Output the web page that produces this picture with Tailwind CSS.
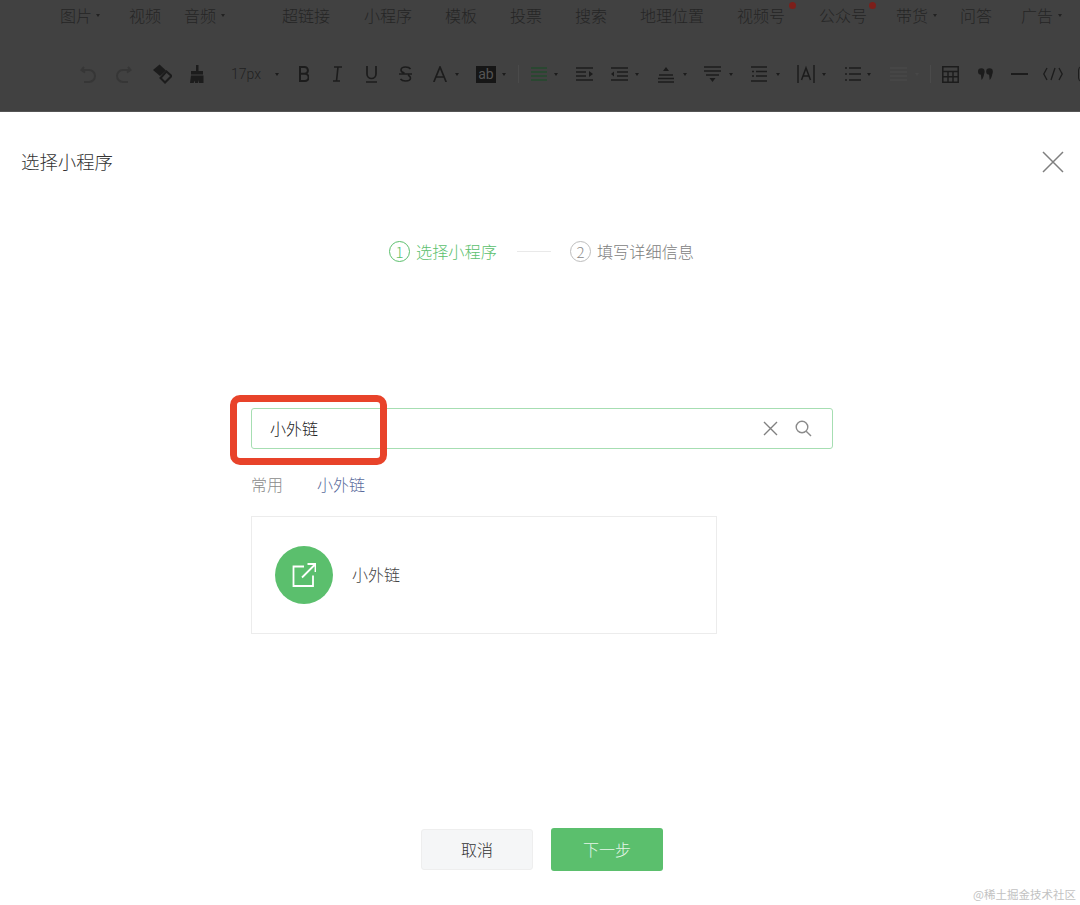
<!DOCTYPE html>
<html lang="zh-CN">
<head>
  <meta charset="UTF-8" />
  <title>选择小程序</title>
  <script src="https://cdn.jsdelivr.net/npm/@tailwindcss/browser@4"></script>
</head>
<body class="w-[1080px] h-[905px] overflow-hidden bg-white font-['Noto_Sans_CJK_SC','Noto_Sans',sans-serif]">

  <!-- Dimmed editor toolbar -->
  <div class="h-[112px] bg-[#414141] border-b border-b-[#555555] overflow-hidden text-[#252525]">
    <div class="h-[30px] flex items-center pl-[60px] text-[16px] font-light whitespace-nowrap *:shrink-0">
      <span class="w-[32px]">图片</span><i class="ml-[4px] border-x-[2px] border-t-[3px] border-x-transparent border-t-[#222]"></i>
      <span class="ml-[29px] w-[32px]">视频</span>
      <span class="ml-[23px] w-[32px]">音频</span><i class="ml-[5px] border-x-[2px] border-t-[3px] border-x-transparent border-t-[#222]"></i>
      <span class="ml-[57px] w-[48px]">超链接</span>
      <span class="ml-[34px] w-[48px]">小程序</span>
      <span class="ml-[33px] w-[32px]">模板</span>
      <span class="ml-[33px] w-[32px]">投票</span>
      <span class="ml-[33px] w-[32px]">搜索</span>
      <span class="ml-[33px] w-[64px]">地理位置</span>
      <span class="ml-[33px] w-[48px] relative">视频号<b class="absolute left-[52px] top-[-1px] w-[7px] h-[7px] rounded-full bg-[#7c1f1a]"></b></span>
      <span class="ml-[34px] w-[48px] relative">公众号<b class="absolute left-[50px] top-[-1px] w-[7px] h-[7px] rounded-full bg-[#7c1f1a]"></b></span>
      <span class="ml-[29px] w-[32px]">带货</span><i class="ml-[5px] border-x-[2px] border-t-[3px] border-x-transparent border-t-[#222]"></i>
      <span class="ml-[23px] w-[32px]">问答</span>
      <span class="ml-[29px] w-[32px]">广告</span><i class="ml-[5px] border-x-[2px] border-t-[3px] border-x-transparent border-t-[#222]"></i>
    </div>

    <div class="mt-[30px] h-[28px] flex items-center pl-[80px] whitespace-nowrap *:shrink-0">
      <!-- undo / redo -->
      <svg class="w-[17px] h-[18px]" viewBox="0 0 17 18" fill="none" stroke="#363636" stroke-width="2"><path d="M4 2 1.500 5 5 7.500M2 5h7a6 6 0 0 1 0 12H4"/></svg>
      <svg class="ml-[18px] w-[17px] h-[18px]" viewBox="0 0 17 18" fill="none" stroke="#363636" stroke-width="2"><path d="M13 2l2.500 3L12 7.500M15 5H8a6 6 0 0 0 0 12h5"/></svg>
      <!-- eraser -->
      <svg class="ml-[20px] w-[20px] h-[20px]" viewBox="0 0 20 20"><path d="M7.500 0.500 14 6.500 8 12 1 6z" fill="#1c1c1c"/><path d="M14.500 7.500 19.500 12 13 18.500 8.500 14z" fill="none" stroke="#1c1c1c" stroke-width="2"/></svg>
      <!-- format painter -->
      <svg class="ml-[18px] w-[14px] h-[18px]" viewBox="0 0 14 18" fill="#1c1c1c"><path d="M6 0h2.500v6H13v3.500H1V6h5zM1 10.500h12.500V18H9v-3l-1 3H5v-2.500L3.500 18H0z"/></svg>

      <span class="ml-[27px] w-[30px] text-[14px] font-['Roboto',sans-serif] font-light text-[#222]">17px</span>
      <i class="ml-[14px] border-x-[2px] border-t-[3px] border-x-transparent border-t-[#1c1c1c]"></i>

      <svg class="ml-[20px] w-[10px] h-[16px]" viewBox="0 0 10 16" fill="none" stroke="#1c1c1c" stroke-width="2"><path d="M1 1h4.500a3.300 3.300 0 0 1 0 6.800H1zM1 7.800h5a3.600 3.600 0 0 1 0 7.200H1z"/></svg>
      <svg class="ml-[24px] w-[9px] h-[16px]" viewBox="0 0 9 16" fill="none" stroke="#1c1c1c" stroke-width="1.600"><path d="M1 1h8M0 15h7M5 1 3.500 15"/></svg>
      <svg class="ml-[24px] w-[11px] h-[18px]" viewBox="0 0 11 18" fill="none" stroke="#1c1c1c" stroke-width="1.700"><path d="M1 1v8a4.500 4.500 0 0 0 9 0V1M0 17h11"/></svg>
      <svg class="ml-[22px] w-[13px] h-[16px]" viewBox="0 0 13 16" fill="none" stroke="#1c1c1c" stroke-width="1.600"><path d="M11.500 3C10.500 1.500 9 1 6.500 1 3.500 1 2 2.200 2 4s1.500 2.600 3.500 3M0 8h13M9 9c1.500.8 2.500 1.700 2.500 3 0 2-2 3-5 3-2.500 0-4-.7-5-2"/></svg>
      <svg class="ml-[21px] w-[14px] h-[16px]" viewBox="0 0 14 16" fill="none" stroke="#1c1c1c" stroke-width="1.700"><path d="M.8 16 7 1l6.200 15M2.800 11h8.400"/></svg>
      <i class="ml-[8px] border-x-[2px] border-t-[3px] border-x-transparent border-t-[#1c1c1c]"></i>
      <span class="ml-[17px] w-[20px] h-[17px] bg-[#161616] flex items-center justify-center text-[14px] leading-none font-['Roboto',sans-serif] text-[#555555]">ab</span>
      <i class="ml-[6px] border-x-[2px] border-t-[3px] border-x-transparent border-t-[#1c1c1c]"></i>
      <span class="ml-[12px] w-px h-[18px] bg-[#4a4a4a]"></span>

      <!-- paragraph tools -->
      <svg class="ml-[12px] w-[16px] h-[16px]" viewBox="0 0 16 16" fill="none" stroke="#234a2c" stroke-width="1.700"><path d="M0 2h16M0 6h16M0 10h16M0 14h16"/></svg>
      <i class="ml-[7px] border-x-[2px] border-t-[3px] border-x-transparent border-t-[#1c1c1c]"></i>
      <svg class="ml-[18px] w-[17px] h-[16px]" viewBox="0 0 17 16" fill="none" stroke="#1c1c1c" stroke-width="1.600"><path d="M0 2h17M0 6h10M0 10h10M0 14h17"/><path d="M17 8l-4-3v6z" fill="#1c1c1c" stroke="none"/></svg>
      <svg class="ml-[18px] w-[17px] h-[16px]" viewBox="0 0 17 16" fill="none" stroke="#1c1c1c" stroke-width="1.600"><path d="M0 2h17M6 6h11M6 10h11M0 14h17"/><path d="M0 8l3-2.500v5z" fill="#1c1c1c" stroke="none"/></svg>
      <i class="ml-[7px] border-x-[2px] border-t-[3px] border-x-transparent border-t-[#1c1c1c]"></i>
      <svg class="ml-[19px] w-[16px] h-[17px]" viewBox="0 0 16 17" fill="none" stroke="#1c1c1c" stroke-width="1.600"><path d="M1 9h14M0 12.500h16M0 16h16"/><path d="M8 1 5 5h6z" fill="#1c1c1c" stroke="none"/></svg>
      <i class="ml-[9px] border-x-[2px] border-t-[3px] border-x-transparent border-t-[#1c1c1c]"></i>
      <svg class="ml-[17px] w-[17px] h-[17px]" viewBox="0 0 17 17" fill="none" stroke="#1c1c1c" stroke-width="1.600"><path d="M0 1h17M0 5h17M2 9h13"/><path d="M8.500 16 5.500 12h6z" fill="#1c1c1c" stroke="none"/></svg>
      <i class="ml-[8px] border-x-[2px] border-t-[3px] border-x-transparent border-t-[#1c1c1c]"></i>
      <svg class="ml-[18px] w-[16px] h-[16px]" viewBox="0 0 16 16" fill="none" stroke="#1c1c1c" stroke-width="1.600"><path d="M0 1h16M5 5.500h11M5 10h11M0 15h16M1 5.500h2M1 10h2"/></svg>
      <i class="ml-[9px] border-x-[2px] border-t-[3px] border-x-transparent border-t-[#1c1c1c]"></i>
      <svg class="ml-[17px] w-[18px] h-[18px]" viewBox="0 0 18 18" fill="none" stroke="#1c1c1c" stroke-width="1.500"><path d="M1 0v18M17 0v18M4.500 15 9 3l4.500 12M6 11h6"/></svg>
      <i class="ml-[7px] border-x-[2px] border-t-[3px] border-x-transparent border-t-[#1c1c1c]"></i>
      <svg class="ml-[19px] w-[16px] h-[16px]" viewBox="0 0 16 16" fill="none" stroke="#1c1c1c" stroke-width="1.600"><path d="M4 2h12M4 8h12M4 14h12M0 2h2M0 8h2M0 14h2"/></svg>
      <i class="ml-[6px] border-x-[2px] border-t-[3px] border-x-transparent border-t-[#1c1c1c]"></i>
      <svg class="ml-[19px] w-[17px] h-[14px]" viewBox="0 0 17 14" fill="none" stroke="#484848" stroke-width="1.600"><path d="M0 1h17M0 5h17M0 9h17M0 13h17"/></svg>
      <i class="ml-[8px] border-x-[2px] border-t-[3px] border-x-transparent border-t-[#484848]"></i>
      <span class="ml-[11px] w-px h-[18px] bg-[#4a4a4a]"></span>

      <svg class="ml-[11px] w-[17px] h-[17px]" viewBox="0 0 17 17" fill="none" stroke="#1c1c1c" stroke-width="1.500"><path d="M.8.800h15.400v15.400H.8zM.8 5.500h15.400M.8 10.800h15.400M6 5.500v10.700M11 5.500v10.700"/></svg>
      <svg class="ml-[19px] w-[15px] h-[12px]" viewBox="0 0 15 12" fill="#1c1c1c"><circle cx="3.300" cy="3.500" r="3.300"/><circle cx="11.500" cy="3.500" r="3.300"/><path d="M6.300 4.500C6 8 5 10.500 3.500 12L2.800 6zM14.500 4.500C14.200 8 13.200 10.500 11.700 12L11 6z"/></svg>
      <span class="ml-[18px] w-[17px] h-[2px] bg-[#1c1c1c]"></span>
      <svg class="ml-[15px] w-[20px] h-[14px]" viewBox="0 0 20 14" fill="none" stroke="#1c1c1c" stroke-width="1.300"><path d="M4 1 .8 7 4 13M16 1l3.200 6-3.200 6M12 1 8 13"/></svg>
      <span class="ml-[15px] w-[8px] h-[16px] rounded-full border border-[#1c1c1c]"></span>
    </div>
  </div>

  <!-- Dialog -->
  <div class="relative">
    <div class="h-[100px] pl-[21px] pr-[16px] flex items-start justify-between">
      <h1 class="mt-[36px] text-[18.400px] leading-[27px] font-light text-[#333333]">选择小程序</h1>
      <svg class="mt-[39px] w-[22px] h-[22px] shrink-0" viewBox="0 0 22 22" fill="none" stroke="#7f7f7f" stroke-width="1.500"><path d="M1 1l20 20M21 1 1 21"/></svg>
    </div>

    <!-- Steps -->
    <div class="mt-[28px] ml-[389px] h-[22px] flex items-center text-[16.200px] font-light whitespace-nowrap">
      <span class="w-[21px] h-[21px] rounded-full border border-[#5bbf6d] flex items-center justify-center text-[15px] leading-none text-[#5bbf6d]">1</span>
      <span class="ml-[6px] text-[#5bbf6d]">选择小程序</span>
      <span class="ml-[20px] w-[34px] h-px bg-[#e9e9e9]"></span>
      <span class="ml-[19px] w-[21px] h-[21px] rounded-full border border-[#bdbdbd] flex items-center justify-center text-[15px] leading-none text-[#8a8a8a]">2</span>
      <span class="ml-[6px] text-[#7d7d7d]">填写详细信息</span>
    </div>

    <!-- Search -->
    <div class="relative mt-[146px] ml-[251px] w-[582px] h-[41px] rounded-[3px] border border-[#a6deb2] flex items-center pl-[18px] pr-[20px]">
      <span class="pb-[2px] text-[16px] text-[#222222] font-light">小外链</span>
      <svg class="ml-auto w-[15px] h-[15px] shrink-0" viewBox="0 0 15 15" fill="none" stroke="#808080" stroke-width="1.400"><path d="M1 1l13 13M14 1 1 14"/></svg>
      <svg class="ml-[17px] w-[17px] h-[17px] shrink-0" viewBox="0 0 17 17" fill="none" stroke="#8a8a8a" stroke-width="1.400"><circle cx="7" cy="7" r="5.800"/><path d="M11.200 11.200l4.800 4.800"/></svg>
      <!-- Red annotation -->
      <div class="absolute left-[-22px] top-[-14px] w-[157px] h-[70px] rounded-[10px] border-[7px] border-[#e8432a]"></div>
    </div>

    <!-- Tabs -->
    <div class="mt-[23px] ml-[251px] flex text-[16px] leading-[24px] font-light">
      <span class="text-[#8a8a8a]">常用</span>
      <span class="ml-[34px] text-[#5a6b9c]">小外链</span>
    </div>

    <!-- Result card -->
    <div class="mt-[20px] ml-[251px] w-[466px] h-[118px] pb-[1px] border border-[#ececec] flex items-center pl-[23px]">
      <div class="w-[58px] h-[58px] rounded-full bg-[#5bbf6d] flex items-center justify-center">
        <svg class="w-[24px] h-[24px]" viewBox="0 0 24 24" fill="none" stroke="#ffffff" stroke-width="1.800"><path d="M12 3.500H1.500V23h19.500V12.500M10 14.500 23 1.500M15.500 1h8v8"/></svg>
      </div>
      <span class="ml-[19px] pb-[2px] text-[16px] font-light text-[#444444]">小外链</span>
    </div>

    <!-- Footer buttons -->
    <div class="mt-[194px] ml-[421px] flex items-center">
      <button class="w-[112px] h-[41px] pb-[2px] rounded-[3px] bg-[#f5f6f7] border border-[#eeeeee] text-[16px] font-light text-[#333333]">取消</button>
      <button class="ml-[18px] w-[112px] h-[43px] pb-[2px] rounded-[3px] bg-[#5bbf6d] text-[16px] font-light text-[#e6f6e9]">下一步</button>
    </div>

    <div class="absolute right-[4px] top-[774px] text-[11.500px] leading-[16px] text-[#c2c2c2] font-['Noto_Sans_CJK_SC',sans-serif]">@稀土掘金技术社区</div>
  </div>

</body>
</html>
